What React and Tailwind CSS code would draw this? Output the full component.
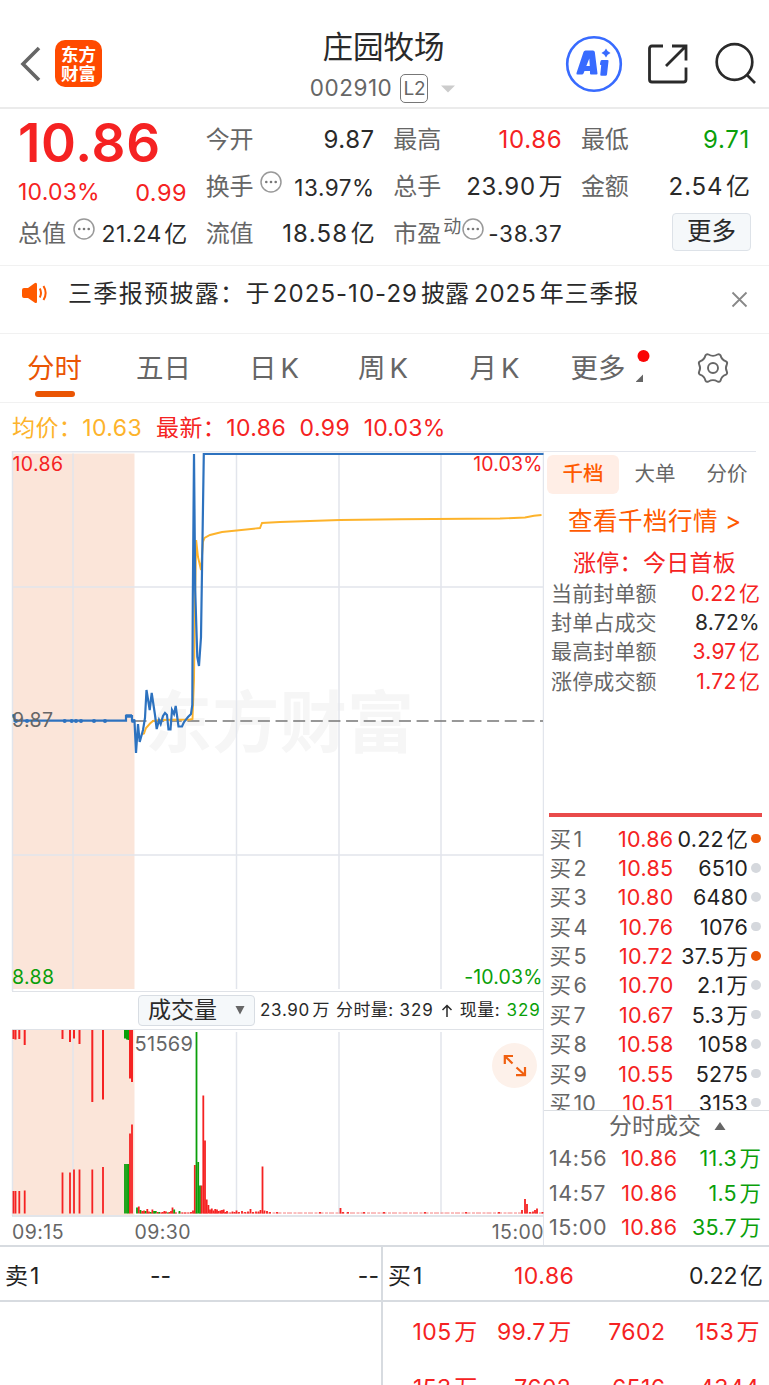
import React from "react";

const RED = "#f52222";
const GREEN = "#0a9f0a";

function Value({ n, u, className = "" }) {
  return (
    <span className={`inline-flex items-center leading-none whitespace-nowrap ${className}`}>
      <span>{n}</span>
      {u && <span className="ml-[2.500px] tracking-normal">{u}</span>}
    </span>
  );
}

function InfoDots({ className = "" }) {
  return (
    <svg width="22" height="22" viewBox="0 0 22 22" className={`shrink-0 ${className}`}>
      <circle cx="11" cy="11" r="10" fill="none" stroke="#999" strokeWidth="1.5" />
      <circle cx="6.3" cy="11" r="1.3" fill="#777" />
      <circle cx="11" cy="11" r="1.3" fill="#777" />
      <circle cx="15.7" cy="11" r="1.3" fill="#777" />
    </svg>
  );
}

function Header() {
  return (
    <header className="flex h-[109px] border-b-2 border-[#ebebeb]">
      <div className="flex w-[240px] items-center pt-[20px] pl-[20px]">
        <svg width="21" height="36" viewBox="0 0 21 36">
          <path d="M19 2 L3 18 L19 34" fill="none" stroke="#666" strokeWidth="3.6" />
        </svg>
        <div className="ml-[14px] flex h-[47px] w-[47px] flex-col items-center justify-center rounded-[10px] bg-[#ff4a00] text-[17.5px] leading-[19px] font-bold text-white">
          <span>东方</span>
          <span>财富</span>
        </div>
      </div>
      <div className="flex w-[287px] flex-col items-center pt-[31px]">
        <div className="text-[30.5px] leading-[31px] text-[#2a2a2a]">庄园牧场</div>
        <div className="mt-[12px] ml-[-2px] flex items-center text-[#666]">
          <span className="text-[22.5px] leading-none tracking-[0.550px]">002910</span>
          <span className="ml-[8px] flex h-[29px] w-[28px] items-center justify-center rounded-[5px] border-[1.5px] border-[#777] text-[19px] leading-none tracking-[-0.3px]">L2</span>
          <svg width="14" height="8" viewBox="0 0 14 8" className="ml-[13px]">
            <path d="M0 0.5H14L7 7.5Z" fill="#ccc" />
          </svg>
        </div>
      </div>
      <div className="flex items-start pt-[35px] pl-[38px]">
        <svg width="58" height="58" viewBox="0 0 58 58">
          <circle cx="29" cy="29" r="26.800" fill="none" stroke="#386bff" strokeWidth="2.600" />
          <path fillRule="evenodd" d="M20.500 15.500H28Q29.500 15.500 29.800 17L32.500 38.500Q32.500 39.500 31.500 39.500H26Q25 39.500 25 38.500V36H19.500L18.500 38.500Q18 39.500 17 39.500H12.500Q11 39.500 11.500 38L18.500 17Q19 15.500 20.500 15.500ZM24.300 23.500L21.300 31H24.800Z" fill="#386bff" />
          <path d="M37 25H42.500Q43.700 25 43.500 26.200L42 39.500Q41.800 40.800 40.500 40.800H36.500Q35 40.800 35.300 39.500L36.200 30H35.700Q34.700 30 35 28.700L35.500 26.300Q35.800 25 37 25Z" fill="#386bff" />
          <path d="M41 13.500Q42.200 16.800 45.500 18Q42.200 19.200 41 22.500Q39.800 19.200 36.500 18Q39.800 16.800 41 13.500Z" fill="#386bff" />
        </svg>
        <svg width="42" height="42" viewBox="0 0 42 42" className="mt-[8px] ml-[24px]">
          <path d="M16 3H5Q2.500 3 2.500 5.500V36.500Q2.500 39 5 39H36.500Q39 39 39 36.500V24.500M25 3H39V17.500M39 3L19 23" fill="none" stroke="#2a2a2a" strokeWidth="2.800" />
        </svg>
        <svg width="44" height="44" viewBox="0 0 44 44" className="mt-[7px] ml-[25px]">
          <circle cx="20.500" cy="20" r="17.800" fill="none" stroke="#2a2a2a" strokeWidth="2.700" />
          <path d="M33 33L41 41" stroke="#2a2a2a" strokeWidth="2.700" />
        </svg>
      </div>
    </header>
  );
}

function Stat({ label, children }) {
  return (
    <div className="flex h-[47px] items-center justify-between">
      <span className="text-[24px] leading-none tracking-normal text-[#666]">{label}</span>
      {children}
    </div>
  );
}

function Stats() {
  return (
    <section className="grid h-[157px] grid-cols-4 gap-x-[18.500px] border-b-[1.5px] border-[#f1f1f1] pr-[19px] pl-[18px] pt-[7.500px] text-[24px] tracking-[0.550px] text-[#2a2a2a]">
      <div>
        <div className="flex h-[53px] items-center text-[53px] leading-none font-semibold tracking-[0.700px] text-[#f52222]">10.86</div>
        <div className="flex h-[40px] items-center justify-between pt-[6px] text-[23px] leading-none tracking-[0.200px] text-[#f52222]">
          <span>10.03%</span>
          <span className="text-[23.500px] tracking-[0.500px]">0.99</span>
        </div>
        <div className="flex h-[49px] items-center">
          <span className="leading-none tracking-normal text-[#666]">总值</span>
          <InfoDots className="mb-[11px] ml-[7px]" />
          <Value n="21.24" u="亿" className="ml-auto text-[23px] tracking-[0.300px]" />
        </div>
      </div>
      <div>
        <Stat label="今开"><Value n="9.87" /></Stat>
        <div className="flex h-[47px] items-center">
          <span className="leading-none tracking-normal text-[#666]">换手</span>
          <InfoDots className="mb-[11px] ml-[6px]" />
          <Value n="13.97%" className="ml-auto pt-[2px] text-[22.5px]" />
        </div>
        <Stat label="流值"><Value n="18.58" u="亿" className="tracking-[1.200px]" /></Stat>
      </div>
      <div>
        <Stat label="最高"><Value n="10.86" className="tracking-[0.700px] text-[#f52222]" /></Stat>
        <Stat label="总手"><Value n="23.90" u="万" className="tracking-[0.800px]" /></Stat>
        <div className="flex h-[47px] items-center">
          <span className="leading-none tracking-normal text-[#666]">市盈</span>
          <span className="mb-[15px] ml-[2px] text-[18px] leading-none tracking-normal text-[#666]">动</span>
          <InfoDots className="mb-[11px] ml-[1px]" />
          <Value n="-38.37" className="ml-auto text-[22.5px] tracking-[0.700px]" />
        </div>
      </div>
      <div>
        <Stat label="最低"><Value n="9.71" className="tracking-[0.700px] text-[#0a9f0a]" /></Stat>
        <Stat label="金额"><Value n="2.54" u="亿" className="tracking-[0.900px]" /></Stat>
        <div className="mt-[2px] mr-[-1px] ml-auto flex h-[38px] w-[79px] items-center justify-center rounded-[4px] border border-[#dde2e8] bg-[#f5f8fa] text-[24.5px] leading-none tracking-normal">更多</div>
      </div>
    </section>
  );
}

function Notice() {
  return (
    <section className="flex h-[68px] items-start border-b-[1.5px] border-[#f1f1f1] pl-[21px] text-[#2a2a2a]">
      <svg width="28" height="22" viewBox="0 0 28 22" className="mt-[16px]">
        <path d="M3 6H7L13.500 1.200Q16 0 16 2.500V19.500Q16 22 13.500 20.500L7 16H3Q1 16 1 14V8Q1 6 3 6Z" fill="#ff5a00" />
        <path d="M18.800 6.500Q21.200 11 18.800 15.500M22.500 4Q26.800 11 22.500 18" fill="none" stroke="#ff5a00" strokeWidth="2" />
      </svg>
      <div className="mt-[16px] ml-[19px] flex items-center text-[24px] leading-none whitespace-nowrap">
        <span className="tracking-[1.350px]">三季报预披露：于</span>
        <span className="ml-[2px] tracking-[1.050px]">2025-10-29</span>
        <span className="ml-[3px]">披露</span>
        <span className="ml-[5px] tracking-[0.900px]">2025</span>
        <span className="ml-[3px] tracking-[0.900px]">年三季报</span>
      </div>
      <svg width="17" height="17" viewBox="0 0 17 17" className="mt-[25px] mr-[21px] ml-auto">
        <path d="M1.500 1.500L15.500 15.500M15.500 1.500L1.500 15.500" stroke="#888" strokeWidth="1.800" />
      </svg>
    </section>
  );
}

function Tabs() {
  return (
    <nav className="flex h-[69px] border-b-[1.5px] border-[#f1f1f1] pl-[27px] text-[27.500px] leading-none whitespace-nowrap text-[#666]">
      <div className="w-[109px] pt-[21px] text-[#ea5504]">
        分时
        <div className="mt-[8.500px] ml-[8px] h-[6px] w-[40px] rounded-full bg-[#ea5504]" />
      </div>
      <div className="w-[113px] pt-[21px]">五日</div>
      <div className="w-[109px] pt-[21px]">日<span className="ml-[4px]">K</span></div>
      <div className="w-[111.500px] pt-[21px]">周<span className="ml-[4px]">K</span></div>
      <div className="w-[101px] pt-[21px]">月<span className="ml-[4px]">K</span></div>
      <div className="flex pt-[21px]">
        更多
        <svg width="16" height="34" viewBox="0 0 16 34" className="mt-[-6px] ml-[10px]">
          <circle cx="7.500" cy="7" r="6" fill="#fa0505" />
          <path d="M7 25.500V33H-0.500Z" fill="#666" />
        </svg>
      </div>
      <svg width="34" height="34" viewBox="0 0 34 34" className="mt-[17px] ml-[44px]">
        <path d="M12.500 3.500Q17 6.200 21.500 3.500Q23.300 2.500 24.500 4.300Q25.500 8.800 30 10.300Q31.800 11.300 30.800 13.500Q29 17 30.800 20.500Q31.800 22.700 30 23.700Q25.500 25.200 24.500 29.700Q23.300 31.500 21.500 30.500Q17 27.800 12.500 30.500Q10.700 31.500 9.500 29.700Q8.500 25.200 4 23.700Q2.200 22.700 3.200 20.500Q5 17 3.200 13.500Q2.200 11.300 4 10.300Q8.500 8.800 9.500 4.300Q10.700 2.500 12.500 3.500Z" fill="none" stroke="#666" strokeWidth="1.900" />
        <circle cx="17" cy="17" r="5" fill="none" stroke="#666" strokeWidth="1.900" />
      </svg>
    </nav>
  );
}

const PRICE =
  "M12.500 715.500H14.500V720.700H126V716H132V720.700H134.500L136 753L138 724L139.700 742L143 730L145 718L146.500 690L149.700 710L151.700 693L155 715L156.700 729L159 720L160.700 724L163 716L165 713L167 715L168.500 729.500H170.500L172 710L174 714L175.700 706L178.500 726.500H182L184 722L188 717L191 714L192.300 705L192.800 600L194 454L195.200 590L197.300 657L199 666L201 637L203.800 454H543.500";
const AVERAGE =
  "M141 734.500L144 733.500L146 728L150 723.500L153 721L160 720L190 719.500L192.500 719L194 680L195 600L196.200 540L198 557L201 570L203 542L204.500 538L210 535L222 532L260 528L262 523L280 522L340 520L400 519.300L500 518.500L525 517.500L534 515.700L541.500 515";

function PriceChart() {
  return (
    <svg width="544" height="540" viewBox="0 451 544 540" className="block" fontSize="19.500" letterSpacing="0.350">
      <rect x="12" y="453.500" width="122.500" height="535.500" fill="#fbe5d9" />
      <text x="145" y="746.500" fontSize="67" fontWeight="700" fill="#f6f6f6">东方财富</text>
      <g stroke="#e2e5ec" strokeWidth="1.500">
        <path d="M12 451.700H543.500M12 587H543.500M12 855H543.500" />
        <path d="M12.500 451V991M73 453.500V989M236.500 453.500V989M339 453.500V989M441 453.500V989M543.500 451V991" />
      </g>
      <path d="M134.500 720.900H543" stroke="#777" strokeWidth="1.500" strokeDasharray="12 5.630" />
      <path d={AVERAGE} fill="none" stroke="#fdb32b" strokeWidth="1.900" />
      <path d={PRICE} fill="none" stroke="#2d72bf" strokeWidth="2.200" />
      {[16, 27, 64.7, 71.7, 76, 81, 94, 105].map((x) => (
        <circle key={x} cx={x} cy="720.900" r="2" fill="#2d72bf" />
      ))}
      <path d="M125.500 716H132M131.500 720.900H135M12.500 716H15" stroke="#2d72bf" strokeWidth="3.500" />
      <text x="12.500" y="470.700" fill={RED}>10.86</text>
      <text x="542.500" y="470.700" textAnchor="end" letterSpacing="0.150" fill={RED}>10.03%</text>
      <text x="12" y="727.300" fill="#666">9.87</text>
      <text x="12" y="983.700" fill={GREEN}>8.88</text>
      <text x="542.500" y="983.700" textAnchor="end" letterSpacing="0.150" fill={GREEN}>-10.03%</text>
    </svg>
  );
}

const BASE = 1213.5;
const TOP_BARS = [
  [13.5, 9, 1], [15.5, 9.5, 1], [19.3, 9, 1], [24.7, 15, 1], [62.5, 9, 1], [70, 12, 1], [74, 8.500, 1], [79.500, 14, 1],
  [92.300, 72, 1], [103, 69.500, 1], [125, 8.500, 0], [127, 9.500, 0], [128.500, 10, 0], [130, 48.500, 1], [132, 52, 1],
];
const BOTTOM_BARS = [
  [13.500, 22.500, 1], [15.500, 22.500, 1], [19.300, 22.500, 1], [24.700, 23, 1], [62.500, 41, 1], [70, 41, 1], [74, 44, 1],
  [79.500, 44, 1], [92.300, 44, 1], [103, 46.500, 1], [125, 49.500, 0], [127, 49.500, 0], [128.500, 49.500, 0], [130, 80, 1], [132, 89, 1],
  [137, 6, 0], [138.800, 7, 1], [140.500, 3.500, 0], [142.300, 2.500, 1], [144, 3, 1], [145.700, 2.500, 0], [147.300, 4.500, 1],
  [149, 2, 1], [150.700, 1.500, 0], [152.400, 4, 1], [154.100, 2.500, 0], [155.800, 2.500, 0], [157.500, 1.500, 1], [159.200, 1.500, 0],
  [161, 1, 1], [162.700, 1.500, 1], [164.400, 2.500, 1], [166, 2, 1], [167.700, 1, 0], [169.400, 1.500, 1], [171, 2.500, 1],
  [172.500, 6, 1], [174.200, 4, 0], [176, 1, 1], [179.500, 2.500, 0], [182, 1, 1], [185, 1, 1], [188, 1, 1], [191, 1.500, 1], [193, 3, 1],
  [194.800, 48.500, 1], [196.500, 181.500, 0], [198.200, 51.500, 0], [200, 28, 0], [201.600, 28, 1], [203.300, 118, 1], [205, 73, 1],
  [206.700, 14, 1], [208.400, 8.500, 1], [210, 4, 1], [211.800, 5, 1], [213.500, 3, 1], [215.200, 4.500, 1], [217, 4, 1], [218.700, 2.500, 1],
  [220.400, 3, 1], [222, 3.500, 1], [223.700, 4, 1], [225.400, 1.500, 1], [227, 2.500, 1], [230, 1, 1], [232.500, 2, 1], [234.500, 1.500, 1],
  [236.500, 3, 1], [239, 1.500, 1], [242, 2.500, 1], [245, 1.500, 1], [248, 2, 1], [250.500, 4.500, 1], [253, 1.500, 1], [256, 2, 1],
  [258.500, 2, 1], [260.500, 3.500, 1], [262.500, 47, 1], [264.500, 3, 1], [267, 2.500, 1], [270, 1.500, 1], [277, 1.500, 1],
  [320, 1.500, 1], [340.500, 5.500, 1], [343, 1.500, 1], [348, 1.500, 1], [364, 1.500, 1], [384, 1.500, 1], [425, 1.500, 1], [466, 1.500, 1],
  [499, 1.500, 1], [522, 3.500, 1], [525, 14.500, 1], [527, 9.500, 1], [530, 1.500, 1], [533, 2, 1], [535, 3.500, 1], [537, 5, 1], [542.500, 1.500, 1],
];

function VolumeChart() {
  return (
    <svg width="544" height="187" viewBox="0 1030 544 187" className="block">
      <rect x="12" y="1030" width="122.500" height="185" fill="#fbe5d9" />
      <path d="M12.500 1030V1216M73 1032V1214M236.500 1032V1214M339 1032V1214M441 1032V1214M543.500 1030V1217" stroke="#e2e5ec" strokeWidth="1.500" />
      <path d="M140 1213H543" stroke="#f58080" strokeWidth="1" strokeDasharray="5 1.500 3 1" />
      {TOP_BARS.map(([x, h, up], i) => (
        <rect key={i} x={x - 1} y="1030" width="2" height={h} fill={up ? RED : GREEN} />
      ))}
      {BOTTOM_BARS.map(([x, h, up], i) => (
        <rect key={i} x={x - 0.9} y={BASE - h} width="1.800" height={h} fill={up ? RED : GREEN} />
      ))}
      <path d="M12 1216H543.500" stroke="#d9dde3" strokeWidth="1.500" />
      <text x="134.500" y="1051" fontSize="20" letterSpacing="0.300" fill="#666">51569</text>
      <circle cx="514.500" cy="1065.500" r="22.500" fill="#fdf1ea" />
      <path d="M513 1056H504.800V1064M505 1056.200L512.500 1063.500M525 1067V1075.200H516M524.800 1075L516.500 1067.500" fill="none" stroke="#f06010" strokeWidth="2.200" />
    </svg>
  );
}

const BIDS = [
  ["1", "10.86", "0.22", "亿", true],
  ["2", "10.85", "6510"],
  ["3", "10.80", "6480"],
  ["4", "10.76", "1076"],
  ["5", "10.72", "37.5", "万", true],
  ["6", "10.70", "2.1", "万"],
  ["7", "10.67", "5.3", "万"],
  ["8", "10.58", "1058"],
  ["9", "10.55", "5275"],
  ["10", "10.51", "3153"],
];

function SidePanel() {
  return (
    <aside className="flex h-[794px] flex-1 flex-col text-[21px] leading-none text-[#666]">
      <div className="mr-[13px] h-[1.5px] bg-[#e2e5ec]" />
      <div className="mt-[3px] ml-[3px] flex h-[39px] text-[20.5px]">
        <div className="flex w-[72px] items-center justify-center rounded-[6px] bg-[#ffeee6] font-medium text-[#ff5a00]">千档</div>
        <div className="flex w-[72px] items-center justify-center">大单</div>
        <div className="flex w-[72px] items-center justify-center">分价</div>
      </div>
      <div className="flex h-[55px] items-center pl-[24px] text-[24.5px] whitespace-nowrap text-[#ff5a00]">
        <span className="tracking-[0.500px]">查看千档行情</span>
        <span className="ml-[7px]">&gt;</span>
      </div>
      <div className="flex h-[32px] items-center pl-[29px] text-[23px] tracking-[0.300px] whitespace-nowrap text-[#f52222]">涨停：今日首板</div>
      <div className="mt-[-1px] h-[118px] pr-[9px] pl-[7px]">
        {[
          ["当前封单额", "0.22", "亿", "text-[#f52222]"],
          ["封单占成交", "8.72%", "", "text-[#2a2a2a]"],
          ["最高封单额", "3.97", "亿", "text-[#f52222]"],
          ["涨停成交额", "1.72", "亿", "text-[#f52222]"],
        ].map(([label, n, u, color]) => (
          <div key={label} className="flex h-[29.300px] items-center justify-between">
            <span className="tracking-[0.150px]">{label}</span>
            <Value n={n} u={u} className={`tracking-[0.300px] ${color}`} />
          </div>
        ))}
      </div>
      <div className="mt-[117.500px] mr-[7px] ml-[5px] h-[4px] shrink-0 bg-[#e94b4b]" />
      <div className="mt-[7.500px] h-[286px] shrink-0 overflow-hidden border-b-[1.500px] border-[#dcdfe3]">
        {BIDS.map(([level, price, n, u, hot]) => (
          <div key={level} className="flex h-[29.350px] items-center pr-[8.500px] pl-[5.500px] text-[21.500px]">
            <span className="w-[44px] whitespace-nowrap">买<span className="ml-[2.500px]">{level}</span></span>
            <span className="w-[80px] text-right tracking-[0.300px] text-[#f52222]">{price}</span>
            <Value n={n} u={u} className="ml-auto tracking-[0.250px] text-[#222]" />
            <span className={`mb-[2px] ml-[3px] h-[9.500px] w-[9.500px] rounded-full ${hot ? "bg-[#ea5504]" : "bg-[#d5d8dd]"}`} />
          </div>
        ))}
      </div>
      <div className="flex h-[31px] shrink-0 items-center pl-[65px] text-[23px]">
        分时成交
        <svg width="12" height="8" viewBox="0 0 12 8" className="ml-[13px]">
          <path d="M6 0L11.500 8H0.500Z" fill="#666" />
        </svg>
      </div>
      {[
        ["14:56", "11.3"],
        ["14:57", "1.5"],
        ["15:00", "35.7"],
      ].map(([time, n]) => (
        <div key={time} className="flex h-[34.400px] shrink-0 items-center pr-[8px] pl-[5px] text-[21.500px]">
          <span className="w-[60px] tracking-[0.600px]">{time}</span>
          <span className="w-[68.500px] text-right tracking-[0.450px] text-[#f52222]">10.86</span>
          <Value n={n} u="万" className="ml-auto tracking-[0.300px] text-[#0a9f0a]" />
        </div>
      ))}
    </aside>
  );
}

function Queue() {
  return (
    <section className="flex h-[140px] overflow-hidden border-t-2 border-[#d7dbe0] text-[23px] leading-none text-[#222]">
      <div className="w-[383px] border-r-2 border-[#d7dbe0]">
        <div className="flex h-[55px] items-center border-b-2 border-[#d7dbe0] pr-[2px] pl-[5px] pt-[5px]">
          <span className="w-[145px]">卖<span className="ml-[2px]">1</span></span>
          <span>--</span>
          <span className="ml-auto">--</span>
        </div>
      </div>
      <div className="flex-1">
        <div className="flex h-[55px] items-center border-b-2 border-[#d7dbe0] pr-[6px] pl-[5px] pt-[5px]">
          <span className="w-[126px]">买<span className="ml-[2px]">1</span></span>
          <span className="tracking-[0.500px] text-[#f52222]">10.86</span>
          <Value n="0.22" u="亿" className="ml-auto" />
        </div>
        {[
          [["105", "万"], ["99.7", "万"], ["7602"], ["153", "万"]],
          [["153", "万"], ["7602"], ["6516"], ["4344"]],
        ].map((row, i) => (
          <div key={i} className="grid h-[56px] grid-cols-4 pt-[5px] pr-[9.500px] tracking-[0.400px] text-[#f52222]">
            {row.map(([n, u], j) => (
              <Value key={j} n={n} u={u} className="justify-end" />
            ))}
          </div>
        ))}
      </div>
    </section>
  );
}

export default function App() {
  return (
    <main className="h-[1385px] w-[769px] overflow-hidden bg-white font-['Inter','Noto_Sans_CJK_SC',sans-serif]">
      <Header />
      <Stats />
      <Notice />
      <Tabs />
      <div className="flex h-[50px] items-center pl-[12px] text-[23px] leading-none tracking-[0.400px] whitespace-nowrap text-[#f52222]">
        <span className="text-[#fdb32b]">均价：10.63</span>
        <span className="ml-[14px]">最新：10.86</span>
        <span className="ml-[13.500px]">0.99</span>
        <span className="ml-[13.500px] tracking-[0.200px]">10.03%</span>
      </div>
      <div className="mt-[-2px] flex h-[794px]">
        <div className="w-[544px]">
          <PriceChart />
          <div className="ml-[12px] flex h-[39px] items-center border-y-[1.500px] border-r-[1.500px] border-[#dfe2e7] pl-[126px] text-[17px] leading-none whitespace-nowrap text-[#2a2a2a]">
            <div className="flex h-[31px] w-[117px] items-center rounded-[4px] border border-[#d8dde3] bg-[#f5f8fa] pl-[9px] text-[23px]">
              成交量
              <svg width="10" height="9" viewBox="0 0 10 9" className="ml-[18px]">
                <path d="M0.500 0H9.500L5 8.500Z" fill="#666" />
              </svg>
            </div>
            <Value n="23.90" u="万" className="ml-[5px] tracking-[0.700px]" />
            <span className="ml-[6.500px] tracking-[0.400px]">分时量:</span>
            <span className="ml-[6px] tracking-[0.900px]">329</span>
            <svg width="12" height="14" viewBox="0 0 12 14" className="ml-[7px]">
              <path d="M6 13V2M1.500 6L6 1.500L10.500 6" fill="none" stroke="#2a2a2a" strokeWidth="1.500" />
            </svg>
            <span className="ml-[7px] tracking-[0.500px]">现量:</span>
            <span className="ml-[6.500px] tracking-[0.900px] text-[#0a9f0a]">329</span>
          </div>
          <VolumeChart />
          <div className="ml-[12px] flex h-[28px] items-center border-r-[1.500px] border-[#e2e5ec] pt-[3px] text-[19.500px] leading-none tracking-[0.450px] text-[#666]">
            <span className="w-[122.500px]">09:15</span>
            <span>09:30</span>
            <span className="mr-[-1px] ml-auto">15:00</span>
          </div>
        </div>
        <SidePanel />
      </div>
      <Queue />
    </main>
  );
}
